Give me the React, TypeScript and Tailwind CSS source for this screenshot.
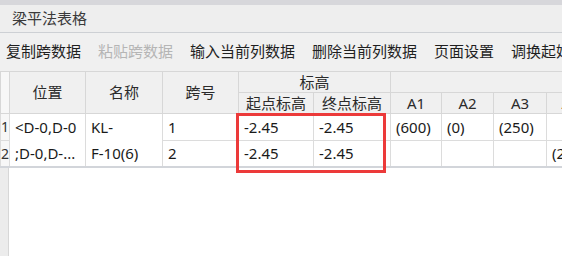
import React from "react";

const toolbar = [
  { label: "复制跨数据" },
  { label: "粘贴跨数据", disabled: true },
  { label: "输入当前列数据" },
  { label: "删除当前列数据" },
  { label: "页面设置" },
  { label: "调换起始跨" },
];

const th = "bg-[#f0f0f0] border border-[#d7d7d7] font-normal text-[#2b2b2b] text-center p-0 whitespace-nowrap overflow-hidden";
const td = "border border-[#dcdcdc] p-0 pl-[5px] text-left whitespace-nowrap overflow-hidden";

export default function App() {
  return (
    <div className="relative w-[562px] h-[256px] overflow-hidden bg-white flex flex-col text-[15px] text-[#1a1a1a] font-['Noto_Sans','Noto_Sans_CJK_SC',sans-serif]">
      <div className="h-[5px] bg-[#d7d7db]" />
      <div className="h-[28px] bg-[#eeeeee] border-b border-[#cdd0d4] pl-[12px] flex items-center text-[#3a3a3a]">
        梁平法表格
      </div>
      <div className="h-[38px] bg-[#f0f0f0] flex items-center gap-[17px] pl-[6px] pb-[2px] whitespace-nowrap">
        {toolbar.map((t) => (
          <span key={t.label} className={t.disabled ? "text-[#b5b5b5]" : "text-[#1f1f1f]"}>
            {t.label}
          </span>
        ))}
      </div>

      <div className="flex-1 flex flex-col">
        <table className="table-fixed border-collapse w-[594px] border-b-2 border-[#d2d5da] leading-none">
          <colgroup>
            <col className="w-[9px]" />
            <col className="w-[76px]" />
            <col className="w-[77px]" />
            <col className="w-[76px]" />
            <col className="w-[75px]" />
            <col className="w-[77px]" />
            <col className="w-[51px]" />
            <col className="w-[52px]" />
            <col className="w-[53px]" />
            <col className="w-[48px]" />
          </colgroup>
          <thead>
            <tr className="h-[21px]">
              <th rowSpan={2} className="bg-[#f7f7f7] border border-[#d7d7d7] p-0" />
              <th rowSpan={2} className={th}>位置</th>
              <th rowSpan={2} className={th}>名称</th>
              <th rowSpan={2} className={th}>跨号</th>
              <th colSpan={2} className={th}>标高</th>
              <th colSpan={4} className={th} />
            </tr>
            <tr className="h-[21px]">
              <th className={th}>起点标高</th>
              <th className={th}>终点标高</th>
              <th className={th}>A1</th>
              <th className={th}>A2</th>
              <th className={th}>A3</th>
              <th className={th}>A4</th>
            </tr>
          </thead>
          <tbody>
            <tr className="h-[27px]">
              <td className="bg-[#f7f7f7] border border-[#dcdcdc] p-0 text-center text-[14px] text-[#333]">1</td>
              <td rowSpan={2} className="border border-[#dcdcdc] p-0 pl-[5px] leading-[26px] whitespace-nowrap overflow-hidden">
                <div>&lt;D-0,D-0</div>
                <div>;D-0,D-...</div>
              </td>
              <td rowSpan={2} className="border border-[#dcdcdc] p-0 pl-[5px] leading-[26px] whitespace-nowrap overflow-hidden">
                <div>KL-</div>
                <div>F-10(6)</div>
              </td>
              <td className={td}>1</td>
              <td className={td}>-2.45</td>
              <td className={td}>-2.45</td>
              <td className={td}>(600)</td>
              <td className={td}>(0)</td>
              <td className={td}>(250)</td>
              <td className={td} />
            </tr>
            <tr className="h-[26px]">
              <td className="bg-[#f7f7f7] border border-[#dcdcdc] p-0 text-center text-[14px] text-[#333]">2</td>
              <td className={td}>2</td>
              <td className={td}>-2.45</td>
              <td className={td}>-2.45</td>
              <td className={td} />
              <td className={td} />
              <td className={td} />
              <td className={`${td} pl-[1px]`}>(250)</td>
            </tr>
          </tbody>
        </table>
        <div className="flex-1 flex">
          <div className="w-[9px] bg-[#ececec] border-r border-[#d7d7d7]" />
        </div>
      </div>

      <div className="absolute left-[236px] top-[113px] w-[150px] h-[60px] border-[3px] border-[#ec3a3a]" />
    </div>
  );
}
